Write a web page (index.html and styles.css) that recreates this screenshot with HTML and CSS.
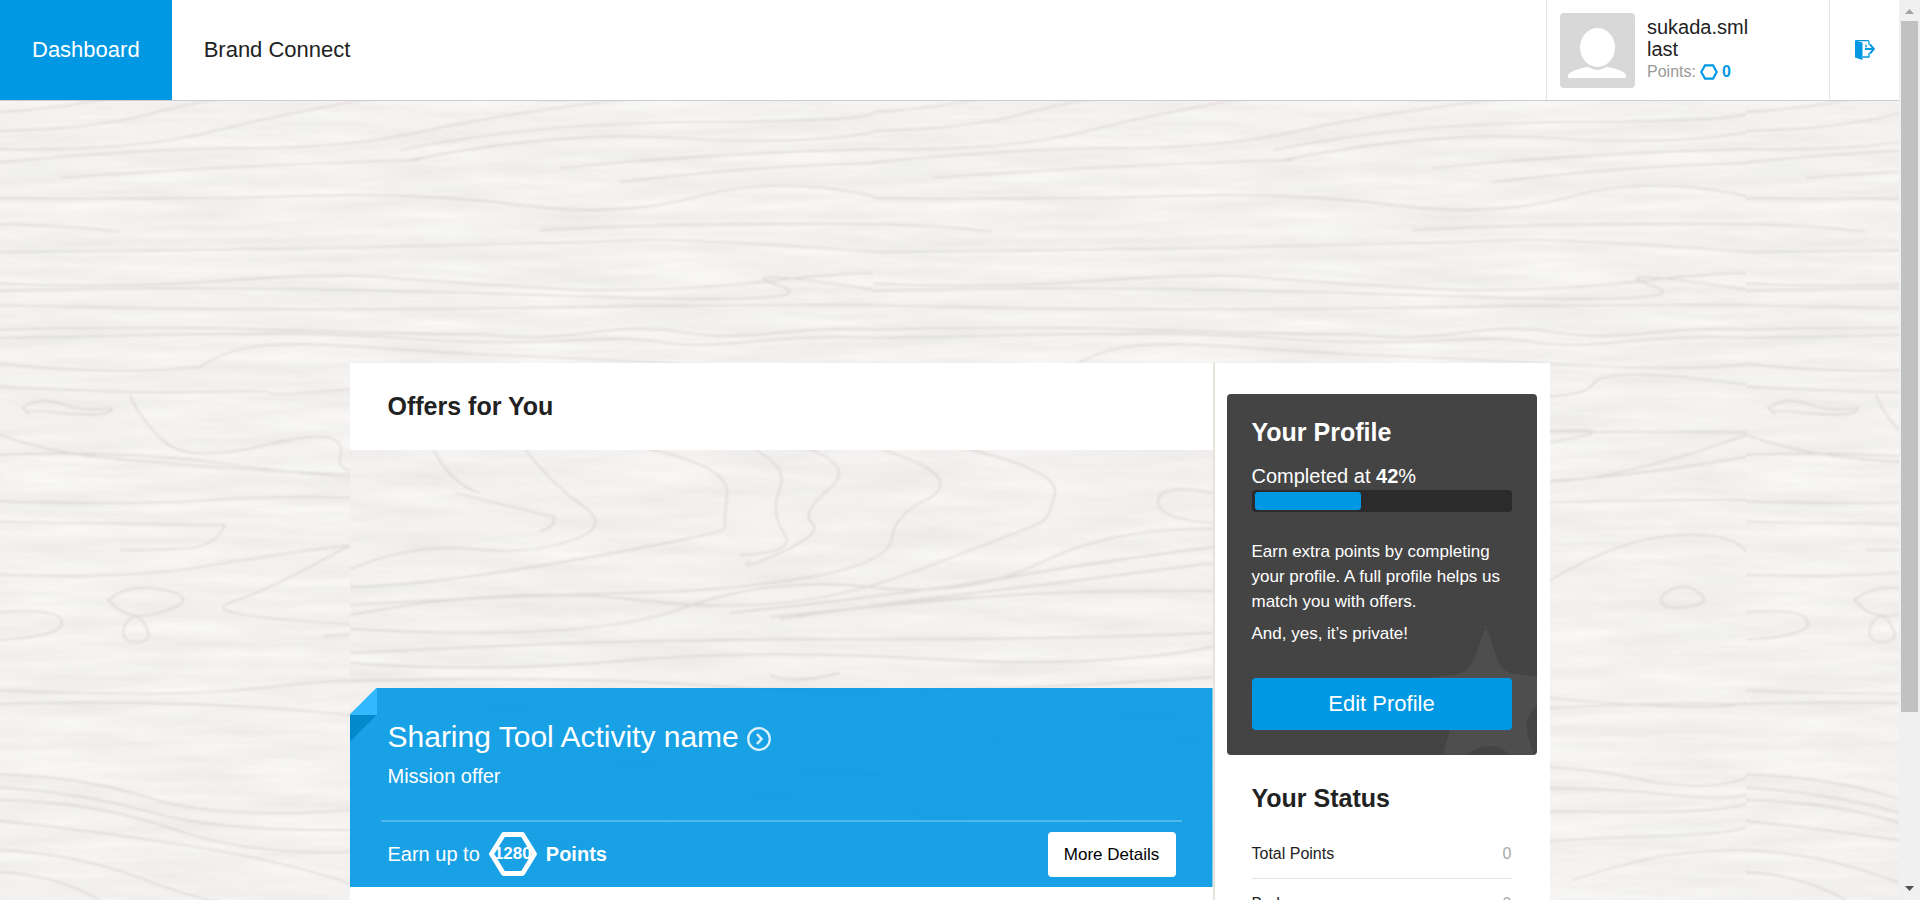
FILE: index.html
```html
<!DOCTYPE html>
<html lang="en">
<head>
<meta charset="utf-8">
<meta name="viewport" content="width=device-width, initial-scale=1">
<title>Dashboard</title>
<link rel="stylesheet" href="styles.css">
</head>
<body>
<div class="window">
  <div class="page">
    <header class="topbar">
      <nav class="nav">
        <a class="nav-link nav-link-active" href="#">Dashboard</a>
        <a class="nav-link" href="#">Brand Connect</a>
      </nav>
      <div class="user">
        <svg class="avatar" viewBox="0 0 75 75" aria-hidden="true">
          <rect width="75" height="75" rx="4" fill="#d8d8d8"/>
          <path fill="#fff" d="M8 65v-3c1-3 11-7 20-8 2 0 6 3 9.500 3s7.500-3 9.500-3c9 1 18 5 19 8v3z"/>
          <ellipse cx="37.500" cy="35" rx="19" ry="21.500" fill="#d8d8d8"/>
          <ellipse cx="37.500" cy="34.500" rx="17.500" ry="19.500" fill="#fff"/>
        </svg>
        <div class="user-info">
          <div class="user-name">sukada.sml last</div>
          <div class="user-points">Points:
            <svg class="hex-small" viewBox="0 0 18 16" aria-hidden="true"><path d="M5 1.300h8L16.700 8 13 14.700H5L1.300 8z" fill="none" stroke="#0098e3" stroke-width="2.200"/></svg>
            <strong>0</strong>
          </div>
        </div>
      </div>
      <a class="logout" href="#" aria-label="Log out">
        <svg class="logout-icon" viewBox="0 0 20 20" aria-hidden="true">
          <path d="M0 .500 7.500 2.500V20L0 17.500z" fill="#0098e3"/>
          <path d="M.5.700h12.500q1 0 1 1.300v3M14 13v4H7.500M11 4.500v3" fill="none" stroke="#0098e3" stroke-width="1.300"/>
          <path d="M10 9h9M15 4.500 19 9l-4 4.500" fill="none" stroke="#0098e3" stroke-width="1.900"/>
        </svg>
      </a>
    </header>

    <div class="content">
      <main class="offers">
        <div class="offers-head"><h2 class="heading">Offers for You</h2></div>
        <article class="offer">
          <div class="offer-body">
            <h3 class="offer-title"><a class="offer-link" href="#">Sharing Tool Activity name
              <svg class="offer-arrow" viewBox="0 0 24 24" aria-hidden="true"><circle cx="12" cy="12" r="10.800" fill="none" stroke="#fff" stroke-opacity=".85" stroke-width="2.200"/><path d="M10 7l4.500 5-4.500 5" fill="none" stroke="#fff" stroke-opacity=".85" stroke-width="2.600"/></svg></a></h3>
            <p class="offer-kind">Mission offer</p>
          </div>
          <div class="offer-foot">
            <div class="earn">Earn up to
              <span class="badge">
                <svg class="badge-shape" viewBox="0 0 48 44" aria-hidden="true"><path d="M14.500 2.500h19L45.500 22l-12 19.500h-19L2.500 22z" fill="none" stroke="#fff" stroke-width="4.800" stroke-linejoin="round"/></svg>
                <span class="badge-value">1280</span>
              </span>
              <strong>Points</strong>
            </div>
            <button class="details" type="button">More Details</button>
          </div>
        </article>
        <div class="offers-rest"></div>
      </main>

      <aside class="sidebar">
        <section class="profile">
          <svg class="star" viewBox="650 80 361 385" aria-hidden="true">
            <path fill="#4e4e4e" d="M866 80c-14 0-22 40-34 70-14 40-30 66-62 72-30 6-70 9-90 11-24 4-30 12-6 28 60 40 84 84 74 129l-19 75h70c20-16 44-28 67-28s47 12 66 28h69c-14-46-21-66-21-85 0-22 9-44 31-60v-92c-46-4-74-6-88-12-24-12-32-40-44-78-8-28-18-58-33-58z"/>
          </svg>
          <h2 class="heading heading-light">Your Profile</h2>
          <p class="completed" id="completed">Completed at <strong>42</strong>%</p>
          <div class="meter" role="progressbar" aria-labelledby="completed" aria-valuenow="42" aria-valuemin="0" aria-valuemax="100"><div class="meter-fill" style="width:42%"></div></div>
          <div class="profile-text">
            <p>Earn extra points by completing your profile. A full profile helps us match you with offers.</p>
            <p>And, yes, it’s private!</p>
          </div>
          <button class="edit" type="button">Edit Profile</button>
        </section>
        <section class="status">
          <h2 class="heading">Your Status</h2>
          <dl class="stats">
            <div class="stat"><dt>Total Points</dt><dd>0</dd></div>
            <div class="stat"><dt>Badges</dt><dd>0</dd></div>
          </dl>
        </section>
      </aside>
    </div>
  </div>

  <div class="scroll" aria-hidden="true">
    <svg class="scroll-arrow" viewBox="0 0 21 21"><path d="M6 14l4.500-5 4.500 5z" fill="#a3a3a3"/></svg>
    <div class="scroll-track"><div class="scroll-thumb"></div></div>
    <svg class="scroll-arrow" viewBox="0 0 21 21"><path d="M6 7l4.500 5L15 7z" fill="#505050"/></svg>
  </div>
</div>
</body>
</html>
```

FILE: styles.css
```css
:root {
  --blue: #0098e3;
  --ink: #222;
  --rule: #e6e4da;
  --wood: url("data:image/svg+xml,%3Csvg xmlns='http://www.w3.org/2000/svg' width='873' height='900'%3E%3Cfilter id='f' x='0' y='0' width='100%25' height='100%25' color-interpolation-filters='sRGB'%3E%3CfeTurbulence type='fractalNoise' baseFrequency='.008 .08' numOctaves='5' seed='8' stitchTiles='stitch'/%3E%3CfeColorMatrix values='.07 0 0 0 .919 .07 .02 0 0 .902 .07 .02 0 0 .897 0 0 0 0 1'/%3E%3C/filter%3E%3Cfilter id='w' x='0' y='0' width='100%25' height='100%25' color-interpolation-filters='sRGB'%3E%3CfeGaussianBlur stdDeviation='.8'/%3E%3C/filter%3E%3Crect width='873' height='900' filter='url(%23f)'/%3E%3Cg filter='url(%23w)' fill='none' stroke='%23b5adab' stroke-opacity='.34' stroke-width='1.700'%3E%3Cpath d='M-9 131Q90 130 150 114T250 96M-9 149Q130 152 210 132T380 97M-9 163Q150 148 250 148T430 130T640 98M60 178Q220 166 420 160M410 160Q560 130 680 138T882 131M400 150Q540 122 700 122T882 112M-9 112Q60 110 120 96M560 168Q720 152 882 149M620 182Q760 165 882 163M-9 198Q180 200 300 196T520 205T700 196T882 198M540 230Q700 222 882 224M-9 224Q60 224 120 232M-9 252Q240 250 420 246T640 240T882 252M-9 283Q110 289 220 281T380 277T540 288T780 280T882 283M-9 291Q240 284 540 295T780 286T882 291M-9 305Q240 312 500 308T882 305M-9 330C240 322 360 336 480 334C580 346 600 320 680 332S780 324 882 330M-9 338C200 335 300 330 400 338C560 350 600 332 660 342S760 333 882 338M-9 363Q110 376 200 367Q225 350 260 346T380 348T520 356T700 365T882 363M-9 386Q130 394 200 392T270 393T340 390T560 394T720 384T882 386M22 408Q40 396 62 404T112 408Q110 418 62 413T30 414ZM130 395Q140 420 165 442T270 444T340 458T560 460T690 430T882 432M-9 432Q40 450 90 456T260 470T480 474T650 480T882 432M-9 455Q120 450 210 462T380 480T600 484T882 455M-9 501Q130 506 210 500T400 500T700 502T882 501M0 522Q150 524 225 525Q215 546 190 548T120 550M-9 574Q120 580 200 567T310 550T350 546M108 600Q130 582 165 590T168 610T118 609ZM350 545Q270 590 232 602T318 622T323 636M125 625Q135 608 145 625T137 642T125 625M0 612Q60 608 62 622T0 640M-9 690Q180 698 260 688T420 680T700 700T882 690M-9 704Q180 698 340 714T600 716T882 704M790 595Q808 580 825 592T812 607T790 595M640 605Q730 540 805 535T882 574M-9 774Q80 776 150 798T350 810M-9 787Q80 792 150 812T350 830M-9 800Q90 800 170 828T350 852M-9 820Q90 830 190 846T350 884M-9 850Q70 852 140 878T220 900M-9 872Q50 872 100 900M560 770Q680 760 760 778T882 774M560 790Q700 784 790 794T882 787M560 810Q700 812 780 812T882 800M560 848Q700 838 790 836T882 820M700 880Q730 870 770 860T882 850'/%3E%3C/g%3E%3C/svg%3E");
  --wood-swirl: url("data:image/svg+xml,%3Csvg xmlns='http://www.w3.org/2000/svg' width='873' height='540'%3E%3Cfilter id='f' x='0' y='0' width='100%25' height='100%25' color-interpolation-filters='sRGB'%3E%3CfeTurbulence type='fractalNoise' baseFrequency='.008 .06' numOctaves='5' seed='21' stitchTiles='stitch'/%3E%3CfeColorMatrix values='.07 0 0 0 .917 .07 .02 0 0 .899 .07 .02 0 0 .894 0 0 0 0 1'/%3E%3C/filter%3E%3Cfilter id='w' x='0' y='0' width='100%25' height='100%25' color-interpolation-filters='sRGB'%3E%3CfeGaussianBlur stdDeviation='.9'/%3E%3C/filter%3E%3Crect width='873' height='540' filter='url(%23f)'/%3E%3Cg filter='url(%23w)' fill='none' stroke='%23b5adab' stroke-opacity='.32' stroke-width='1.800'%3E%3Cpath d='M80 80Q100 122 130 130M105 130Q180 148 204 154Q206 164 190 168M170 80Q200 120 232 142T220 178T120 186T0 206M270 80Q380 100 377 130T375 165T230 196T0 224M390 80Q440 100 430 125T434 170T390 192M440 80Q510 100 480 125T462 160T430 190T400 198M510 80Q620 110 580 135Q545 150 542 175T460 214T280 230T0 242M590 80Q710 105 705 130T690 160T560 210T300 238T0 252M863 130Q810 120 808 138T863 160M863 166Q760 165 690 200T520 224T330 246T0 266M863 184Q740 200 660 214T380 250M863 200Q740 216 640 228T430 256M863 228Q700 226 560 240T420 254M0 290Q200 280 300 278T560 276T863 270M0 300Q130 310 270 298T580 296T863 284M420 312Q440 322 490 310M0 318Q220 312 380 324T863 314M0 350Q220 340 400 352T863 350M0 410Q300 400 500 410T863 400M0 460Q260 470 500 460T863 465'/%3E%3C/g%3E%3C/svg%3E");
}

* { box-sizing: border-box; }

body {
  margin: 0;
  color: var(--ink);
  font-family: "Liberation Sans", Arial, sans-serif;
  font-size: 20px;
}

h2, h3, p, dl, dd { margin: 0; }

button {
  border: 0;
  border-radius: 4px;
  font-family: inherit;
  cursor: pointer;
}

.window {
  display: grid;
  grid-template-columns: 1fr 21px;
  height: 100vh;
  overflow: hidden;
}

.page {
  min-width: 0;
  overflow: hidden;
  background: #f3f1f0 var(--wood);
}

/* Top bar */
.topbar {
  display: flex;
  height: 101px;
  background: #fff;
  border-bottom: 1px solid #cfcccc;
}

.nav { display: flex; flex: 1; }

.nav-link {
  display: flex;
  align-items: center;
  padding: 0 32px;
  color: var(--ink);
  font-size: 22px;
  line-height: 28px;
  text-decoration: none;
}

.nav-link-active { background: var(--blue); color: #fff; }

.user {
  display: flex;
  gap: 12px;
  width: 283px;
  padding: 13px;
  border-left: 1px solid var(--rule);
}

.avatar { flex: none; width: 75px; height: 75px; }

.user-info { width: 110px; padding-top: 3px; }
.user-name { line-height: 22px; }

.user-points {
  display: flex;
  align-items: center;
  gap: 4px;
  color: #999;
  font-size: 16px;
  line-height: 24px;
}

.user-points strong { color: var(--blue); }
.hex-small { width: 18px; height: 16px; }

.logout {
  display: flex;
  align-items: center;
  justify-content: center;
  width: 70px;
  border-left: 1px solid var(--rule);
}

.logout-icon { width: 20px; height: 20px; }

/* Content columns */
.content {
  display: flex;
  width: 100%;
  max-width: 1200px;
  margin: 262px auto 0;
}

.offers {
  flex: 1;
  background: var(--wood-swirl);
}

.heading { font-size: 25px; line-height: 30px; }
.heading-light { color: #fff; }

.offers-head {
  margin-bottom: 238px;
  padding: 28px 38px 29px;
  background: #fff;
}

.offer {
  position: relative;
  background: rgba(0, 152, 227, .9);
  color: #fff;
  clip-path: polygon(27px 0, 100% 0, 100% 100%, 0 100%, 0 27px);
}

.offer::before,
.offer::after {
  content: "";
  position: absolute;
  left: 0;
  width: 27px;
  height: 27px;
}

.offer::before {
  top: 0;
  background: #33b9ff;
}

.offer::after {
  top: 27px;
  background: #008acb;
  clip-path: polygon(0 0, 100% 0, 0 100%);
}

.offer-body {
  margin: 0 31px;
  padding: 30px 7px 32px;
  border-bottom: 2px solid #51b7ec;
}

.offer-title { font-size: 30px; font-weight: 400; line-height: 38px; }

.offer-link {
  display: inline-flex;
  align-items: center;
  gap: 8px;
  color: #fff;
  text-decoration: none;
}

.offer-arrow { width: 24px; height: 24px; margin-top: 4px; }
.offer-kind { padding-top: 8px; line-height: 24px; }

.offer-foot {
  display: flex;
  align-items: flex-start;
  justify-content: space-between;
  padding: 10px 37px 10px 38px;
}

.earn { display: flex; align-items: center; gap: 9px; }

.badge {
  display: grid;
  place-items: center;
  width: 48px;
  height: 44px;
}

.badge-shape,
.badge-value { grid-area: 1 / 1; }
.badge-shape { width: 48px; height: 44px; }
.badge-value { font-size: 17px; font-weight: 700; }

.details {
  width: 128px;
  height: 45px;
  background: #fff;
  color: #000;
  font-size: 17px;
}

.offers-rest { height: 60px; background: #fff; }

/* Sidebar */
.sidebar {
  width: 337px;
  padding: 31px 13px 0 12px;
  background: #fff;
  border-left: 2px solid var(--rule);
}

.profile {
  position: relative;
  padding: 23px 25px 25px;
  border-radius: 4px;
  background: #444;
  color: #fff;
  overflow: hidden;
}

.star {
  position: absolute;
  right: 0;
  bottom: 0;
  width: 120px;
  height: 128px;
}

.completed { padding-top: 17px; line-height: 24px; }

.meter {
  height: 22px;
  margin-top: 2px;
  padding: 2px 3px;
  border-radius: 4px;
  background: #2b2b2b;
}

.meter-fill { height: 18px; border-radius: 3px; background: var(--blue); }

.profile-text {
  position: relative;
  display: grid;
  gap: 7px;
  padding: 27px 0 32px;
  font-size: 17px;
  line-height: 25px;
}

.edit {
  position: relative;
  width: 100%;
  height: 52px;
  background: var(--blue);
  color: #fff;
  font-size: 22px;
}

.status { padding: 28px 25px 0; }
.stats { padding-top: 16px; font-size: 16px; }

.stat {
  display: flex;
  justify-content: space-between;
  height: 50px;
  line-height: 49px;
  border-bottom: 1px solid #e2e2e2;
}

.stat dd { color: #aaa; }

/* Scroll rail */
.scroll {
  display: flex;
  flex-direction: column;
  background: #f0f0f0;
}

.scroll-arrow { width: 21px; height: 21px; }
.scroll-track { flex: 1; padding: 0 2px; }
.scroll-thumb { height: 80.5%; background: #c1c1c1; }
```
